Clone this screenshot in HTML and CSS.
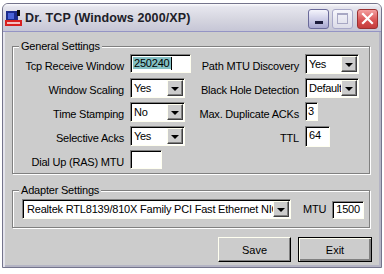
FILE: index.html
```html
<!DOCTYPE html>
<html lang="en">
<head>
    <meta charset="UTF-8">
    <title>Dr. TCP (Windows 2000/XP)</title>
    <link rel="stylesheet" href="styles.css">
</head>
<body>
    <div class="window">
        <div class="titlebar">
            <svg class="app-icon" width="17" height="17" viewBox="0 0 17 17">
                <rect x="1" y="1" width="12" height="11" fill="#1c2c8c"/>
                <rect x="3" y="3" width="6" height="6" fill="#4a64d8"/>
                <rect x="12" y="0" width="3" height="6" fill="#101010"/>
                <rect x="0" y="10" width="17" height="6" fill="#d82020"/>
                <rect x="2" y="12" width="13" height="2" fill="#f4c0c0"/>
            </svg>
            <span class="title">Dr. TCP (Windows 2000/XP)</span>
            <div class="caption-buttons">
                <span class="cap-btn min"><i></i></span>
                <span class="cap-btn max"><i></i></span>
                <span class="cap-btn close">
                    <svg width="13" height="13" viewBox="0 0 13 13">
                        <path d="M2 2 L11 11 M11 2 L2 11" stroke="#fff" stroke-width="2.2" stroke-linecap="square"/>
                    </svg>
                </span>
            </div>
        </div>

        <div class="body">
            <div class="group general">
                <span class="group-label">General Settings</span>
                <div class="settings">
                    <label>Tcp Receive Window</label>
                    <div class="field w61"><span class="selected">250240</span><span class="caret"></span></div>
                    <label>Path MTU Discovery</label>
                    <div class="combo w54"><span>Yes</span><b class="drop"></b></div>

                    <label>Window Scaling</label>
                    <div class="combo w55"><span>Yes</span><b class="drop"></b></div>
                    <label>Black Hole Detection</label>
                    <div class="combo w54"><span>Default</span><b class="drop"></b></div>

                    <label>Time Stamping</label>
                    <div class="combo w55"><span>No</span><b class="drop"></b></div>
                    <label>Max. Duplicate ACKs</label>
                    <div class="field w13">3</div>

                    <label>Selective Acks</label>
                    <div class="combo w55"><span>Yes</span><b class="drop"></b></div>
                    <label>TTL</label>
                    <div class="field w25 tall">64</div>

                    <label>Dial Up (RAS) MTU</label>
                    <div class="field w32"></div>
                </div>
            </div>

            <div class="group adapter">
                <span class="group-label">Adapter Settings</span>
                <div class="adapter-row">
                    <div class="combo wide"><span>Realtek RTL8139/810X Family PCI Fast Ethernet NIC</span><b class="drop"></b></div>
                    <label class="mtu-label">MTU</label>
                    <div class="field w32 short">1500</div>
                </div>
            </div>

            <div class="actions">
                <button class="btn">Save</button>
                <button class="btn default">Exit</button>
            </div>
        </div>
    </div>
</body>
</html>
```

FILE: styles.css
```css
body {
    margin: 0;
    background: #fff;
    font-family: "Liberation Sans", Arial, sans-serif;
    font-size: 11px;
    letter-spacing: -0.2px;
    color: #000;
}
.window {
    margin: 3px 0 0 2px;
    width: 380px;
    height: 265px;
    box-sizing: border-box;
    border: 1px solid #74748c;
    border-radius: 6px 6px 0 0;
    background: #ccc;
    display: flex;
    flex-direction: column;
    overflow: hidden;
}
.titlebar {
    height: 28px;
    box-sizing: border-box;
    flex: none;
    display: flex;
    align-items: center;
    padding: 0 3px 0 2px;
    background: linear-gradient(#fcfcfe 0, #e6e6ee 3px, #d6d6e0 55%, #c6c6d6 100%);
    border-bottom: 1px solid #9494c4;
}
.app-icon {
    flex: none;
    margin-top: 1px;
}
.title {
    margin-left: 3px;
    font-size: 12.5px;
    font-weight: bold;
    color: #202028;
    letter-spacing: 0.1px;
}
.caption-buttons {
    margin-left: auto;
    display: flex;
    gap: 2px;
    margin-top: 2px;
}
.cap-btn {
    width: 21px;
    height: 20px;
    box-sizing: border-box;
    border-radius: 3px;
    display: flex;
    align-items: center;
    justify-content: center;
}
.cap-btn.min {
    border: 1px solid #6a6a9a;
    background: linear-gradient(#f4f4fc, #c0c0e0 70%, #a8a8d0);
    align-items: flex-end;
}
.cap-btn.min i {
    width: 8px;
    height: 3px;
    background: #1c1c3c;
    margin-bottom: 4px;
}
.cap-btn.max {
    border: 1px solid #a8a8c8;
    background: linear-gradient(#f6f6fc, #dcdce8);
    margin-left: 1px;
}
.cap-btn.max i {
    width: 9px;
    height: 8px;
    border: 1px solid #a8a8c4;
    border-top-width: 2px;
}
.cap-btn.close {
    border: 1px solid #9c3030;
    background: linear-gradient(#f4a0a0, #d85050 60%, #c43c3c);
    margin-left: 2px;
}

.body {
    flex: 1;
    padding: 14px 0 0 9px;
    box-shadow: inset 2px 0 #e4e4ec, inset -2px 0 #b4b4c4, inset 0 -2px #b4b4c4;
}
.group {
    width: 358px;
    box-sizing: border-box;
    border: 1px solid #808080;
    box-shadow: inset 1px 1px #fff, 1px 1px #fff;
    display: flex;
    flex-direction: column;
}
.group.general {
    height: 128px;
}
.group.adapter {
    height: 38px;
    margin-top: 16px;
}
.group-label {
    align-self: flex-start;
    margin: -7px 0 0 6px;
    padding: 0 2px;
    line-height: 13px;
    background: #ccc;
}
.settings {
    display: grid;
    grid-template-columns: 117px 61px 114px 54px;
    grid-auto-rows: 20px;
    row-gap: 4px;
    margin-top: 1px;
}
.settings label {
    align-self: end;
    text-align: right;
    padding-right: 6px;
    line-height: 13px;
    margin-bottom: 1px;
    white-space: nowrap;
}
.field, .combo {
    box-sizing: border-box;
    height: 19px;
    background: #fff;
    border-top: 1px solid #808080;
    border-left: 1px solid #808080;
    border-bottom: 1px solid #fffff0;
    border-right: 1px solid #fffff0;
    box-shadow: inset 1px 1px #000;
    padding: 2px 0 0 3px;
    line-height: 13px;
    white-space: nowrap;
    overflow: hidden;
}
.combo {
    height: 20px;
    display: flex;
    align-items: flex-start;
    padding-left: 2px;
    padding-right: 1px;
}
.combo span {
    flex: 1;
    overflow: hidden;
    padding-top: 1px;
    padding-left: 1px;
    letter-spacing: -0.3px;
}
.drop {
    flex: none;
    width: 16px;
    height: 16px;
    box-sizing: border-box;
    margin-top: -1px;
    background: #ccc;
    border-top: 1px solid #fffff0;
    border-left: 1px solid #fffff0;
    border-right: 1px solid #404040;
    border-bottom: 1px solid #404040;
    box-shadow: inset -1px -1px #808080;
    display: flex;
    align-items: center;
    justify-content: center;
}
.drop::after {
    content: "";
    border-left: 4px solid transparent;
    border-right: 4px solid transparent;
    border-top: 4px solid #000;
    margin: 1px 1px 0 0;
}
.w13 { width: 13px; padding-left: 2px; }
.w25 { width: 25px; }
.w32 { width: 32px; }
.w54 { width: 54px; }
.w55 { width: 55px; }
.w61 { width: 61px; padding-left: 2px; }
.field.tall { height: 21px; }
.field.short { height: 18px; padding-top: 1px; }
.selected {
    background: #84c0c4;
    padding: 0 1px;
}
.caret {
    display: inline-block;
    width: 1px;
    height: 13px;
    background: #000;
    vertical-align: top;
}

.adapter-row {
    display: flex;
    align-items: flex-start;
    padding-left: 9px;
    margin-top: 2px;
}
.combo.wide {
    width: 269px;
}
.combo.wide span {
    padding-left: 2px;
    letter-spacing: -0.2px;
}
.mtu-label {
    margin: 4px 0 0 12px;
}
.adapter-row .field {
    margin: 2px 0 0 6px;
}

.actions {
    display: flex;
    gap: 7px;
    margin: 9px 0 0 206px;
}
.btn {
    width: 73px;
    height: 25px;
    box-sizing: border-box;
    font-family: inherit;
    font-size: 11px;
    background: #ccc;
    border-top: 1px solid #fffff0;
    border-left: 1px solid #fffff0;
    border-right: 1px solid #000;
    border-bottom: 1px solid #000;
    box-shadow: inset -1px -1px #808080;
    padding: 0;
}
.btn.default {
    width: 74px;
    border: 1px solid #000;
    box-shadow: inset 1px 1px #fffff0, inset -2px -2px #808080;
}
```
